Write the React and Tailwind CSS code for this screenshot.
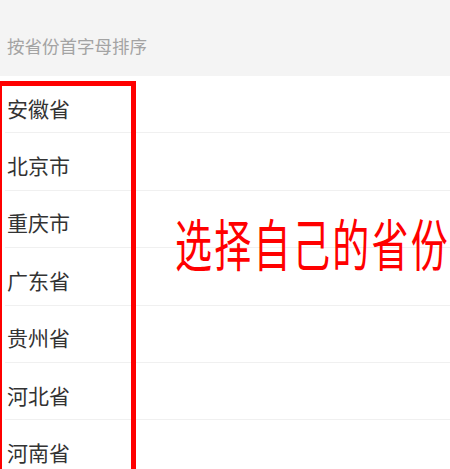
import React from 'react';

const provinces = ['安徽省', '北京市', '重庆市', '广东省', '贵州省', '河北省', '河南省', '黑龙江省'];

const App = () => {
  return (
    <div
      className="relative w-[450px] h-[469px] overflow-hidden bg-white"
      style={{ fontFamily: '"Noto Sans CJK SC", "Noto Sans", sans-serif' }}
    >
      {/* header */}
      <div className="h-[76px] bg-[#f4f4f4] flex items-end pl-[7px] pb-[22px]">
        <span className="text-[17.5px] leading-none text-[#a3a3a3]">按省份首字母排序</span>
      </div>

      {/* province list */}
      <ul className="ml-[5px]">
        {provinces.map((name) => (
          <li
            key={name}
            className="h-[57.4px] border-b border-[#f0f0f0] flex items-center pl-[2px] pt-[8px]"
          >
            <span className="text-[21px] leading-none text-[#333333]">{name}</span>
          </li>
        ))}
      </ul>

      {/* annotation box */}
      <div className="absolute left-[-3px] top-[81px] w-[139px] h-[420px] border-[5px] border-[#ff0000]" />

      {/* annotation text */}
      <div className="absolute left-[175px] top-[215px] whitespace-nowrap text-[37px] leading-none tracking-[2.3px] text-[#ff0000] scale-y-[1.5] origin-top">
        选择自己的省份
      </div>
    </div>
  );
};

export default App;
